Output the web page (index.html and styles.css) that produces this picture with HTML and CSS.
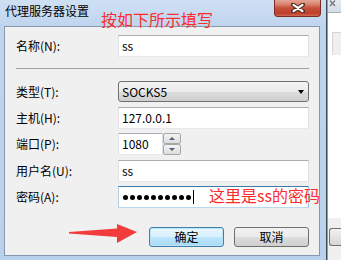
FILE: index.html
```html
<!DOCTYPE html>
<html>
<head>
<meta charset="utf-8">
<link rel="stylesheet" href="styles.css">
</head>
<body>
<div class="screen">
  <div class="window">
    <div class="titlebar">
      <span class="title">代理服务器设置</span>
      <div class="close">
        <svg width="14" height="10" viewBox="0 0 14 10">
          <path d="M2 1.5 L12 8.5 M12 1.5 L2 8.5" stroke="#4a2a24" stroke-width="4" stroke-linecap="round"/>
          <path d="M2.5 1.8 L11.5 8.2 M11.5 1.8 L2.5 8.2" stroke="#ffffff" stroke-width="2.2" stroke-linecap="round"/>
        </svg>
      </div>
    </div>
    <div class="client">
      <div class="row">
        <span class="label">名称(N):</span>
        <div class="edit">ss</div>
      </div>
      <div class="sep"></div>
      <div class="row">
        <span class="label">类型(T):</span>
        <div class="combo"><span>SOCKS5</span><span class="combo-arrow"></span></div>
      </div>
      <div class="row host">
        <span class="label">主机(H):</span>
        <div class="edit">127.0.0.1</div>
      </div>
      <div class="row port">
        <span class="label">端口(P):</span>
        <div class="edit short">1080</div>
        <div class="spin">
          <div class="spin-btn"><span class="tri up"></span></div>
          <div class="spin-btn"><span class="tri down"></span></div>
        </div>
      </div>
      <div class="row user">
        <span class="label">用户名(U):</span>
        <div class="edit">ss</div>
      </div>
      <div class="row pass">
        <span class="label">密码(A):</span>
        <div class="edit focused">
          <span class="dots"><i></i><i></i><i></i><i></i><i></i><i></i><i></i><i></i><i></i><i></i></span><span class="caret"></span>
        </div>
      </div>
      <div class="buttons">
        <div class="btn default">确定</div>
        <div class="btn">取消</div>
      </div>
    </div>
  </div>
  <div class="behind">
    <div class="b-top">
      <svg class="b-x" width="7" height="7" viewBox="0 0 7 7">
        <path d="M1 0.5 L6 6 M6 0.5 L1 6" stroke="#7a7a7a" stroke-width="1.4"/>
      </svg>
    </div>
    <div class="b-white"><div class="b-box"></div></div>
    <div class="b-gray"><div class="b-btn"></div></div>
  </div>

  <div class="note note-title">按如下所示填写</div>
  <div class="note note-pass">这里是ss的密码</div>
  <svg class="arrow" width="70" height="20" viewBox="0 0 70 20">
    <polygon points="0,8 48,4.5 48,0 68,8 48,19 48,13 0,9.5" fill="#f23c3c"/>
  </svg>
</div>
</body>
</html>
```

FILE: styles.css
```css
* {
  box-sizing: border-box;
  margin: 0;
  padding: 0;
}

html, body {
  width: 341px;
  height: 260px;
  overflow: hidden;
}

body {
  font-family: "Noto Sans CJK SC", "Noto Sans", sans-serif;
  font-size: 12px;
  color: #000;
  background: #fff;
}

.screen {
  position: relative;
  display: flex;
  width: 341px;
  height: 260px;
}

.window {
  flex: none;
  width: 327px;
  height: 260px;
  padding: 0 6px 0 4px;
  border-right: 1px solid #3d4a5a;
  background: linear-gradient(#cfe0f4, #bfd5ee 26px, #b9d1ea);
  display: flex;
  flex-direction: column;
}

.titlebar {
  position: relative;
  height: 26px;
  flex: none;
  padding: 3px 0 0 1px;
}

.title {
  display: block;
  line-height: 16px;
  font-size: 12px;
  color: #000;
}

.close {
  position: absolute;
  left: 270px;
  top: -2px;
  width: 47px;
  height: 19px;
  border: 1px solid #7a2b22;
  border-top: none;
  border-radius: 0 0 4px 4px;
  background: linear-gradient(#eab2a6 0%, #d98470 35%, #c6503b 55%, #bf3f2b 85%, #d06a52 100%);
  display: flex;
  align-items: center;
  justify-content: center;
  padding-top: 1px;
}

.client {
  flex: none;
  width: 316px;
  height: 230px;
  border: 1px solid #8799b0;
  background: #f0f0f0;
  padding: 8px 10px 0 11px;
  display: flex;
  flex-direction: column;
}

.row {
  display: flex;
  align-items: center;
  height: 22px;
  flex: none;
}

.label {
  width: 102px;
  flex: none;
  line-height: 16px;
  white-space: nowrap;
}

.edit {
  width: 191px;
  height: 22px;
  background: #fff;
  border: 1px solid;
  border-color: #abadb3 #dbdfe6 #e3e9ef #e2e3ea;
  padding-left: 3px;
  display: flex;
  align-items: center;
  line-height: 16px;
}

.edit.short {
  width: 45px;
}

.edit.focused {
  border-color: #3d7bad #a4c9e3 #b7d9ed #b5cfe7;
}

.sep {
  height: 1px;
  flex: none;
  background: #a0a0a0;
  margin: 11px 0 12px;
}

.combo {
  width: 191px;
  height: 21px;
  border: 1px solid #707070;
  border-radius: 3px;
  background: linear-gradient(#f3f3f3 0%, #ebebeb 50%, #dddddd 51%, #cfcfcf 100%);
  display: flex;
  align-items: center;
  justify-content: space-between;
  padding: 0 4px 0 3px;
  line-height: 16px;
}

.row:nth-child(3) {
  height: 21px;
}

.combo-arrow {
  width: 0;
  height: 0;
  border-left: 3.5px solid transparent;
  border-right: 3.5px solid transparent;
  border-top: 4px solid #000;
}

.host {
  margin-top: 5px;
}

.port {
  margin-top: 4px;
}

.user {
  margin-top: 5px;
}

.pass {
  margin-top: 4px;
}

.spin {
  width: 18px;
  height: 22px;
  display: flex;
  flex-direction: column;
}

.spin-btn {
  height: 11px;
  border: 1px solid #a7a7a7;
  border-radius: 2px;
  background: linear-gradient(#f4f4f4, #dcdcdc);
  display: flex;
  align-items: center;
  justify-content: center;
}

.tri {
  width: 0;
  height: 0;
  border-left: 3.5px solid transparent;
  border-right: 3.5px solid transparent;
}

.tri.up {
  border-bottom: 3px solid #4c5e7c;
}

.tri.down {
  border-top: 3px solid #4c5e7c;
}

.dots {
  display: flex;
  gap: 2px;
  padding-left: 1px;
}

.dots i {
  display: block;
  width: 5px;
  height: 5px;
  border-radius: 50%;
  background: #000;
}

.caret {
  width: 1px;
  height: 14px;
  background: #000;
  margin-left: 2px;
}

.buttons {
  display: flex;
  justify-content: flex-end;
  gap: 10px;
  margin-top: 19px;
}

.btn {
  width: 75px;
  height: 20px;
  border: 1px solid #707070;
  border-radius: 3px;
  background: linear-gradient(#f2f2f2 0%, #ebebeb 50%, #dddddd 51%, #cfcfcf 100%);
  display: flex;
  align-items: center;
  justify-content: center;
  line-height: 16px;
}

.btn.default {
  border-color: #3c7fb1;
  background: linear-gradient(#eaf6fd 0%, #d9f0fc 50%, #bee6fd 51%, #a7d9f5 100%);
  box-shadow: inset 0 0 0 1px #bfe4f8;
}

.behind {
  flex: 1;
  height: 260px;
  border-left: 1px solid #9a9a9a;
  display: flex;
  flex-direction: column;
  background: #fff;
}

.b-top {
  height: 13px;
  background: linear-gradient(#e3eaf2, #d4dde8);
  border-bottom: 1px solid #b0b0b0;
  position: relative;
}

.b-x {
  position: absolute;
  left: 1px;
  top: 0;
}

.b-white {
  height: 205px;
  padding: 19px 0 0 4px;
}

.b-box {
  height: 23px;
  background: #efefef;
  border-top: 1px solid #d6d6d6;
  border-left: 1px solid #d6d6d6;
}

.b-gray {
  flex: 1;
  background: #f0f0f0;
  padding: 10px 0 0 1px;
}

.b-btn {
  height: 18px;
  border: 1px solid #707070;
  border-right: none;
  border-radius: 3px 0 0 3px;
  background: linear-gradient(#f2f2f2, #d6d6d6);
}

.note {
  position: absolute;
  color: #ff2a2a;
  font-size: 16px;
  line-height: 20px;
  white-space: nowrap;
}

.note-title {
  left: 101px;
  top: 9px;
}

.note-pass {
  left: 209px;
  top: 185px;
}

.arrow {
  position: absolute;
  left: 69px;
  top: 224px;
}
```
